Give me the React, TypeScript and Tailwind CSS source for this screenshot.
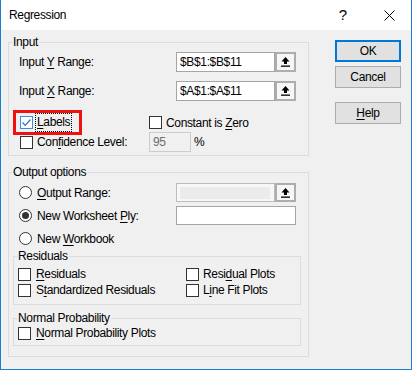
import type { ReactNode } from "react";

// Mnemonic: the underlined access key in a label
function M({ children }: { children: ReactNode }) {
  return <span className="underline underline-offset-[2px] decoration-1">{children}</span>;
}

function Checkbox({ checked = false }: { checked?: boolean }) {
  return (
    <span
      className={
        checked
          ? "flex w-[13px] h-[13px] shrink-0 items-center justify-center border border-[#3c8de0] bg-white"
          : "flex w-[13px] h-[13px] shrink-0 items-center justify-center border border-[#333333] bg-white"
      }
    >
      {checked && (
        <svg width="11" height="11" viewBox="0 0 11 11">
          <polyline points="1.5,5.5 4.2,8.3 9.5,2.5" fill="none" stroke="#2b75c9" strokeWidth="1.2" />
        </svg>
      )}
    </span>
  );
}

function Radio({ checked = false }: { checked?: boolean }) {
  return (
    <span className="flex w-[13px] h-[13px] shrink-0 items-center justify-center rounded-full border border-[#333333] bg-white">
      {checked && <span className="w-[7px] h-[7px] rounded-full bg-[#333333]" />}
    </span>
  );
}

function PickButton() {
  return (
    <div className="flex w-[21px] h-full shrink-0 items-center justify-center border-2 border-[#adadad] bg-[#f6f6f6]">
      <svg width="9" height="10" viewBox="0 0 9 10">
        <polygon points="4.5,0 8.5,4.5 6,4.5 6,7 3,7 3,4.5 0.5,4.5" fill="#000" />
        <rect x="0" y="8.5" width="9" height="1.3" fill="#000" />
      </svg>
    </div>
  );
}

function Group({
  title,
  className,
  children,
}: {
  title: string;
  className: string;
  children: ReactNode;
}) {
  return (
    <div className={"relative border border-[#dcdcdc] " + className}>
      <span className="absolute -top-[9px] left-[3px] bg-[#f0f0f0] px-[1px] leading-[16px]">{title}</span>
      {children}
    </div>
  );
}

function DlgButton({ children, primary = false, className = "" }: { children: ReactNode; primary?: boolean; className?: string }) {
  return (
    <div
      className={
        (primary
          ? "border-2 border-[#0078d7] "
          : "border border-[#adadad] ") +
        "flex w-[66px] h-[22px] items-center justify-center bg-[#e1e1e1] " +
        className
      }
    >
      {children}
    </div>
  );
}

export default function App() {
  return (
    <div className="w-[412px] h-[370px] flex flex-col bg-[#f0f0f0] border-x border-b border-[#1a7fd4] font-['Liberation_Sans',Arial,sans-serif] text-[12px] leading-[16px] tracking-[-0.35px] text-black overflow-hidden">
      {/* title bar */}
      <div className="flex h-[30px] shrink-0 items-center bg-white pl-[8px]">
        <span className="flex-1">Regression</span>
        <span className="text-[15px] tracking-normal mr-[37px]">?</span>
        <svg width="11" height="11" viewBox="0 0 11 11" className="mr-[16px]">
          <path d="M0.5 0.5 L10.5 10.5 M10.5 0.5 L0.5 10.5" stroke="#000" strokeWidth="1" />
        </svg>
      </div>

      <div className="flex flex-1 pl-[7px] pt-[10px]">
        {/* left column */}
        <div className="w-[301px] pt-[2px]">
          <Group title="Input" className="h-[114px]">
            <div className="mt-[9px] flex h-[20px] items-center">
              <div className="w-[167px] pl-[10px]">
                Input <M>Y</M> Range:
              </div>
              <div className="flex h-full w-[99px] items-center border border-[#a5a5a5] bg-white pl-[3px]">$B$1:$B$11</div>
              <PickButton />
            </div>
            <div className="mt-[9px] flex h-[20px] items-center">
              <div className="w-[167px] pl-[10px]">
                Input <M>X</M> Range:
              </div>
              <div className="flex h-full w-[99px] items-center border border-[#a5a5a5] bg-white pl-[3px]">$A$1:$A$11</div>
              <PickButton />
            </div>
            <div className="mt-[12px] flex h-[19px] items-center">
              <div className="flex w-[140px] items-center pl-[11px]">
                <Checkbox checked />
                <span className="ml-[2px] h-[19px] border border-dotted border-black px-[1px] leading-[17px]">
                  <M>L</M>abels
                </span>
              </div>
              <Checkbox />
              <span className="ml-[4px]">
                Constant is <M>Z</M>ero
              </span>
            </div>
            <div className="flex h-[20px] items-center">
              <div className="flex w-[140px] items-center pl-[11px]">
                <Checkbox />
                <span className="ml-[4px]">
                  Con<M>f</M>idence Level:
                </span>
              </div>
              <div className="flex h-full w-[42px] items-center border border-[#cccccc] bg-[#f0f0f0] pl-[3px] text-[#6d6d6d]">
                95
              </div>
              <span className="ml-[3px]">%</span>
            </div>
            {/* red highlight around the Labels option */}
            <div className="absolute left-[4px] top-[67px] w-[69px] h-[25px] border-[3px] border-[#ee1111]" />
          </Group>

          <Group title="Output options" className="mt-[16px] h-[185px] px-[4px]">
            <div className="mt-[10px] flex h-[19px] items-center">
              <div className="flex w-[163px] items-center pl-[6px]">
                <Radio />
                <span className="ml-[5px]">
                  <M>O</M>utput Range:
                </span>
              </div>
              <div className="flex h-full w-[99px] items-center border border-[#bcbcbc] bg-[#f7f7f7] pl-[3px]">
                <div className="h-[12px] w-[90px] bg-[#ebebeb]" />
              </div>
              <PickButton />
            </div>
            <div className="mt-[4px] flex h-[19px] items-center">
              <div className="flex w-[163px] items-center pl-[6px]">
                <Radio checked />
                <span className="ml-[5px]">
                  New Worksheet <M>P</M>ly:
                </span>
              </div>
              <div className="h-full w-[120px] border border-[#a5a5a5] bg-white" />
            </div>
            <div className="mt-[4px] flex h-[19px] items-center pl-[6px]">
              <Radio />
              <span className="ml-[5px]">
                New <M>W</M>orkbook
              </span>
            </div>

            <Group title="Residuals" className="mt-[8px] h-[49px] w-[288px] pl-[4px]">
              <div className="mt-[9px] grid grid-cols-[168px_1fr]">
                <div className="flex h-[16px] items-center">
                  <Checkbox />
                  <span className="ml-[5px]">
                    <M>R</M>esiduals
                  </span>
                </div>
                <div className="flex h-[16px] items-center">
                  <Checkbox />
                  <span className="ml-[4px]">
                    Resi<M>d</M>ual Plots
                  </span>
                </div>
                <div className="flex h-[16px] items-center">
                  <Checkbox />
                  <span className="ml-[5px]">
                    S<M>t</M>andardized Residuals
                  </span>
                </div>
                <div className="flex h-[16px] items-center">
                  <Checkbox />
                  <span className="ml-[4px]">
                    L<M>i</M>ne Fit Plots
                  </span>
                </div>
              </div>
            </Group>

            <Group title="Normal Probability" className="mt-[13px] h-[28px] w-[288px] pl-[4px]">
              <div className="mt-[6px] flex h-[16px] items-center">
                <Checkbox />
                <span className="ml-[5px]">
                  <M>N</M>ormal Probability Plots
                </span>
              </div>
            </Group>
          </Group>
        </div>

        {/* right column: dialog buttons */}
        <div className="ml-[26px] flex flex-col">
          <DlgButton primary>OK</DlgButton>
          <DlgButton className="mt-[4px]">Cancel</DlgButton>
          <DlgButton className="mt-[14px]">
            <span>
              <M>H</M>elp
            </span>
          </DlgButton>
        </div>
      </div>
    </div>
  );
}
